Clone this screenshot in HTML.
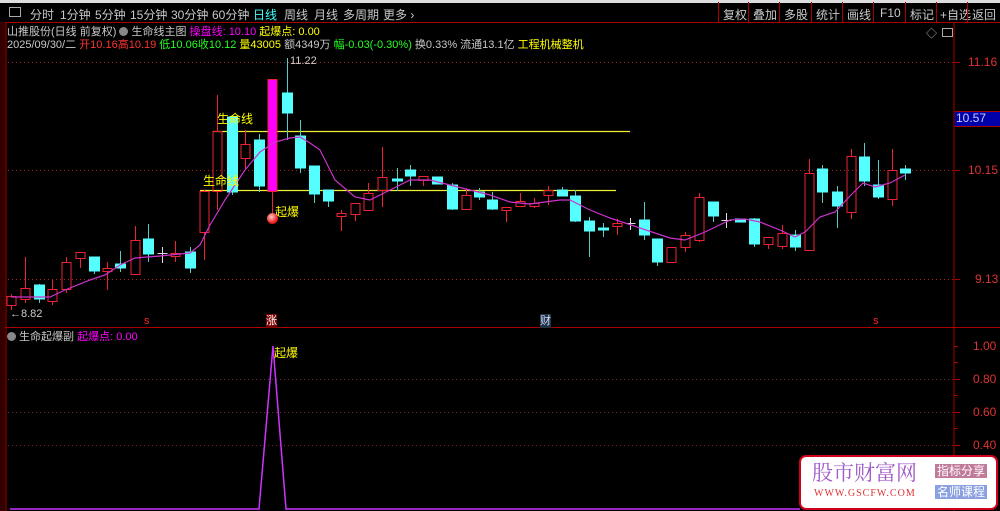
<!DOCTYPE html>
<html><head><meta charset="utf-8">
<style>
body{margin:0;width:1000px;height:511px;background:#000;overflow:hidden;font-family:"Liberation Sans","Noto Sans CJK SC",sans-serif;position:relative}
.t{position:absolute;white-space:nowrap;font-size:12px;line-height:14px}
.h{font-size:11px}
#bar{position:absolute;left:0;top:0;width:1000px;height:22px;background:#000;border-bottom:1px solid #a00}
#bar span{position:absolute;top:4px;font-size:12px;color:#c8c8c8}
.rb{position:absolute;top:2px;height:20px;border-left:1px solid #a00}
</style></head><body>
<div style="position:absolute;left:0;top:0;width:1000px;height:3px;background:#ddd"></div>
<div id="bar" style="top:3px;height:19px">
<div style="position:absolute;left:9px;top:4px;width:10px;height:8px;border:1px solid #aaa"></div>
<span style="left:30px;top:3px">分时</span><span style="left:60px;top:3px">1分钟</span><span style="left:95px;top:3px">5分钟</span><span style="left:130px;top:3px">15分钟</span><span style="left:171px;top:3px">30分钟</span><span style="left:212px;top:3px">60分钟</span><span style="left:253px;top:3px;color:#4ff">日线</span><span style="left:284px;top:3px">周线</span><span style="left:314px;top:3px">月线</span><span style="left:343px;top:3px">多周期</span><span style="left:383px;top:3px">更多 ›</span>
<span style="left:723px;top:3px">复权</span><span style="left:753px;top:3px">叠加</span><span style="left:784px;top:3px">多股</span><span style="left:816px;top:3px">统计</span><span style="left:847px;top:3px">画线</span><span style="left:880px;top:3px">F10</span><span style="left:910px;top:3px">标记</span><span style="left:940px;top:3px">+自选</span><span style="left:972px;top:3px">返回</span>
</div>
<div class="rb" style="left:718px"></div><div class="rb" style="left:748px"></div><div class="rb" style="left:779px"></div><div class="rb" style="left:811px"></div><div class="rb" style="left:842px"></div><div class="rb" style="left:873px"></div><div class="rb" style="left:905px"></div><div class="rb" style="left:936px"></div><div class="rb" style="left:967px"></div>
<svg id="s" width="1000" height="511" style="position:absolute;left:0;top:0"></svg>
<div class="t h" style="left:7px;top:25px;color:#c8c8c8">山推股份(日线 前复权) <span style="display:inline-block;width:9px;height:9px;border-radius:5px;background:#888;vertical-align:-1px"></span> 生命线主图 <span style="color:#f0f">操盘线: 10.10</span> <span style="color:#ff0">起爆点: 0.00</span></div>
<div class="t h" style="left:7px;top:38px;color:#c8c8c8">2025/09/30/二 <span style="color:#f33">开10.16</span><span style="color:#f33">高10.19</span> <span style="color:#2f2">低10.06</span><span style="color:#2f2">收10.12</span> <span style="color:#ff0">量43005</span> 额4349万 <span style="color:#2f2">幅-0.03(-0.30%)</span> 换0.33% 流通13.1亿 <span style="color:#ff0">工程机械整机</span></div>
<div class="t" style="left:926px;top:27px;color:#aaa;font-size:11px">◇</div>
<div style="position:absolute;left:942px;top:28px;width:9px;height:7px;border:1px solid #aaa"></div>
<div class="t" style="left:290px;top:54px;color:#ccc;font-size:11px">11.22</div>
<div class="t" style="left:10px;top:307px;color:#ccc;font-size:11px">←8.82</div>
<div class="t" style="left:217px;top:112px;color:#ff0">生命线</div>
<div class="t" style="left:203px;top:174px;color:#ff0">生命线</div>
<div class="t" style="left:275px;top:205px;color:#ff0">起爆</div>
<div style="position:absolute;left:267px;top:213px;width:11px;height:11px;border-radius:6px;background:radial-gradient(circle at 40% 35%,#fcc,#e22 60%,#a00)"></div>
<div class="t" style="left:274px;top:346px;color:#ff0">起爆</div>
<div class="t h" style="left:7px;top:330px;color:#c8c8c8"><span style="display:inline-block;width:9px;height:9px;border-radius:5px;background:#888;vertical-align:-1px"></span> 生命起爆副 <span style="color:#f0f">起爆点: 0.00</span></div>
<div class="t" style="left:144px;top:314px;color:#f22;font-size:11px">s</div>
<div class="t" style="left:266px;top:314px;color:#fff;font-size:11px;background:#700">涨</div>
<div class="t" style="left:540px;top:314px;color:#cdf;font-size:11px;background:#234">财</div>
<div class="t" style="left:873px;top:314px;color:#f22;font-size:11px">s</div>
<div class="t" style="left:968px;top:55px;color:#d33">11.16</div>
<div style="position:absolute;left:955px;top:111px;width:45px;height:14px;background:#00a;border-top:1px solid #a00;border-bottom:1px solid #a00"></div>
<div class="t" style="left:956px;top:111px;color:#ccf">10.57</div>
<div class="t" style="left:968px;top:163px;color:#d33">10.15</div>
<div class="t" style="left:975px;top:272px;color:#d33">9.13</div>
<div class="t" style="left:973px;top:339px;color:#d33">1.00</div>
<div class="t" style="left:973px;top:372px;color:#d33">0.80</div>
<div class="t" style="left:973px;top:405px;color:#d33">0.60</div>
<div class="t" style="left:973px;top:438px;color:#d33">0.40</div>
<div style="position:absolute;left:799px;top:455px;width:195px;height:51px;background:#fff;border:2px solid #d0021b;border-radius:7px"></div>
<div class="t" style="left:812px;top:460px;font-size:21px;line-height:24px;color:#a05ac8;font-family:'Noto Serif CJK SC',serif">股市财富网</div>
<div class="t" style="left:814px;top:487px;font-size:10px;color:#d33;font-family:'Liberation Serif',serif;letter-spacing:1px">WWW.GSCFW.COM</div>
<div class="t" style="left:935px;top:464px;font-size:12px;color:#fff;background:#c07a9a;padding:0 2px">指标分享</div>
<div class="t" style="left:935px;top:485px;font-size:12px;color:#fff;background:#8aa0e0;padding:0 2px">名师课程</div>
<script>
var s=document.getElementById('s'),h='';
function L(x1,y1,x2,y2,c,w,d){h+='<line x1="'+x1+'" y1="'+y1+'" x2="'+x2+'" y2="'+y2+'" stroke="'+c+'" stroke-width="'+(w||1)+'"'+(d?' stroke-dasharray="'+d+'"':'')+'/>';}
function R(x,y,w,hh,f,c){h+='<rect x="'+x+'" y="'+y+'" width="'+w+'" height="'+hh+'" fill="'+f+'" stroke="'+c+'"/>';}
L(6,22,6,511,'#a00');L(954,22,954,511,'#a00');L(0,327.5,1000,327.5,'#a00');
h+='<rect x="0" y="22" width="5" height="489" fill="#300"/>';
[62,170,279].forEach(function(y){L(8,y+.5,953,y+.5,'#a22',1,'1 3');L(954,y+.5,960,y+.5,'#a00');});
[379,412,445].forEach(function(y){L(8,y+.5,953,y+.5,'#822',1,'1 3');L(954,y+.5,960,y+.5,'#a00');});
[346,362,395,428].forEach(function(y){L(954,y+.5,958,y+.5,'#a00');});
L(213,131.5,630,131.5,'#ee3',1.3);L(200,190.5,616,190.5,'#ee3',1.3);
var C=[[11,'r',296,305,294,310],[25,'r',288,299,257,303],[39,'c',285,299,284,303],[52,'r',289,301,280,305],[66,'r',262,289,257,293],[80,'r',252,258,252,268],[94,'c',257,271,257,274],[107,'r',268,271,262,290],[120,'c',264,268,251,272],[135,'r',240,274,226,274],[148,'c',239,254,224,262],[162,'g',253,254,247,263],[175,'r',253,256,241,262],[190,'c',252,268,247,273],[204,'r',191,232,190,260],[217,'r',131,191,95,210],[232,'c',117,192,117,195],[245,'r',144,158,130,170],[259,'c',140,186,134,192],[272,'m',79,191,79,213],[287,'c',93,113,58,140],[300,'c',136,168,120,173],[314,'c',166,194,166,203],[328,'c',190,201,190,207],[341,'r',213,216,210,231],[355,'r',203,214,203,221],[368,'r',193,210,183,210],[382,'r',177,190,147,207],[397,'c',179,181,168,191],[410,'c',170,176,165,186],[423,'r',176,180,176,186],[437,'c',177,184,177,184],[452,'c',185,209,183,210],[466,'r',195,209,189,209],[479,'c',192,197,188,200],[492,'c',200,209,192,210],[506,'r',207,210,207,222],[520,'r',201,206,193,207],[534,'r',203,206,198,208],[548,'r',190,195,186,205],[562,'c',190,196,187,196],[575,'c',196,221,190,222],[589,'c',221,231,217,257],[603,'c',228,229,223,237],[617,'r',223,226,219,235],[630,'g',223,224,218,230],[644,'c',220,235,202,240],[657,'c',239,262,239,266],[671,'r',247,262,247,262],[685,'r',235,247,232,252],[699,'r',197,240,193,242],[713,'c',202,216,202,222],[726,'g',220,221,213,228],[740,'c',219,222,219,222],[754,'c',219,244,218,247],[768,'r',237,244,237,249],[782,'r',233,246,225,249],[795,'c',235,247,230,251],[809,'r',173,250,159,251],[822,'c',169,192,165,203],[837,'c',192,206,186,228],[851,'r',156,212,149,219],[864,'c',157,181,143,186],[878,'c',185,197,160,199],[892,'r',170,199,149,206],[905,'c',169,173,165,180]];
C.forEach(function(k){var x=k[0],t=k[1],a=k[2],b=k[3],hi=k[4],lo=k[5];
 var col=t=='r'||t=='m'?'#e23':t=='c'?'#5ff':'#ddd';
 if(t=='c'){L(x+.5,hi,x+.5,lo,'#5cc');R(x-4.5,a,10,Math.max(b-a,2),'#5ff','#5ff');}
 else if(t=='g'){L(x+.5,hi,x+.5,lo,'#ddd');L(x-4.5,a+.5,x+5.5,a+.5,'#ddd');}
 else{L(x+.5,hi,x+.5,a,col);L(x+.5,b,x+.5,lo,col);R(x-4,a+.5,9,Math.max(b-a,1),t=='m'?'#f0f':'none',col);}
});
var M=[[11,297],[50,297],[65,290],[90,280],[105,275],[120,265],[135,258],[160,256],[190,253],[200,245],[210,225],[225,200],[245,170],[260,152],[275,142],[290,138],[300,137],[310,143],[320,150],[335,180],[355,197],[370,200],[390,190],[410,180],[430,180],[450,185],[470,190],[490,195],[510,202],[530,204],[560,200],[570,200],[590,210],[610,218],[640,228],[670,238],[685,240],[705,232],[730,220],[745,219],[760,222],[780,230],[795,237],[805,232],[820,217],[835,212],[850,196],[863,183],[875,187],[890,183],[905,175]];
h+='<polyline fill="none" stroke="#c3c" stroke-width="1.2" points="'+M.map(function(p){return p.join(',')}).join(' ')+'"/>';
h+='<polyline fill="none" stroke="#c3f" stroke-width="1.5" points="10,509 259,509 273,346 286,509 800,509"/>';
s.innerHTML=h;
</script>
</body></html>
